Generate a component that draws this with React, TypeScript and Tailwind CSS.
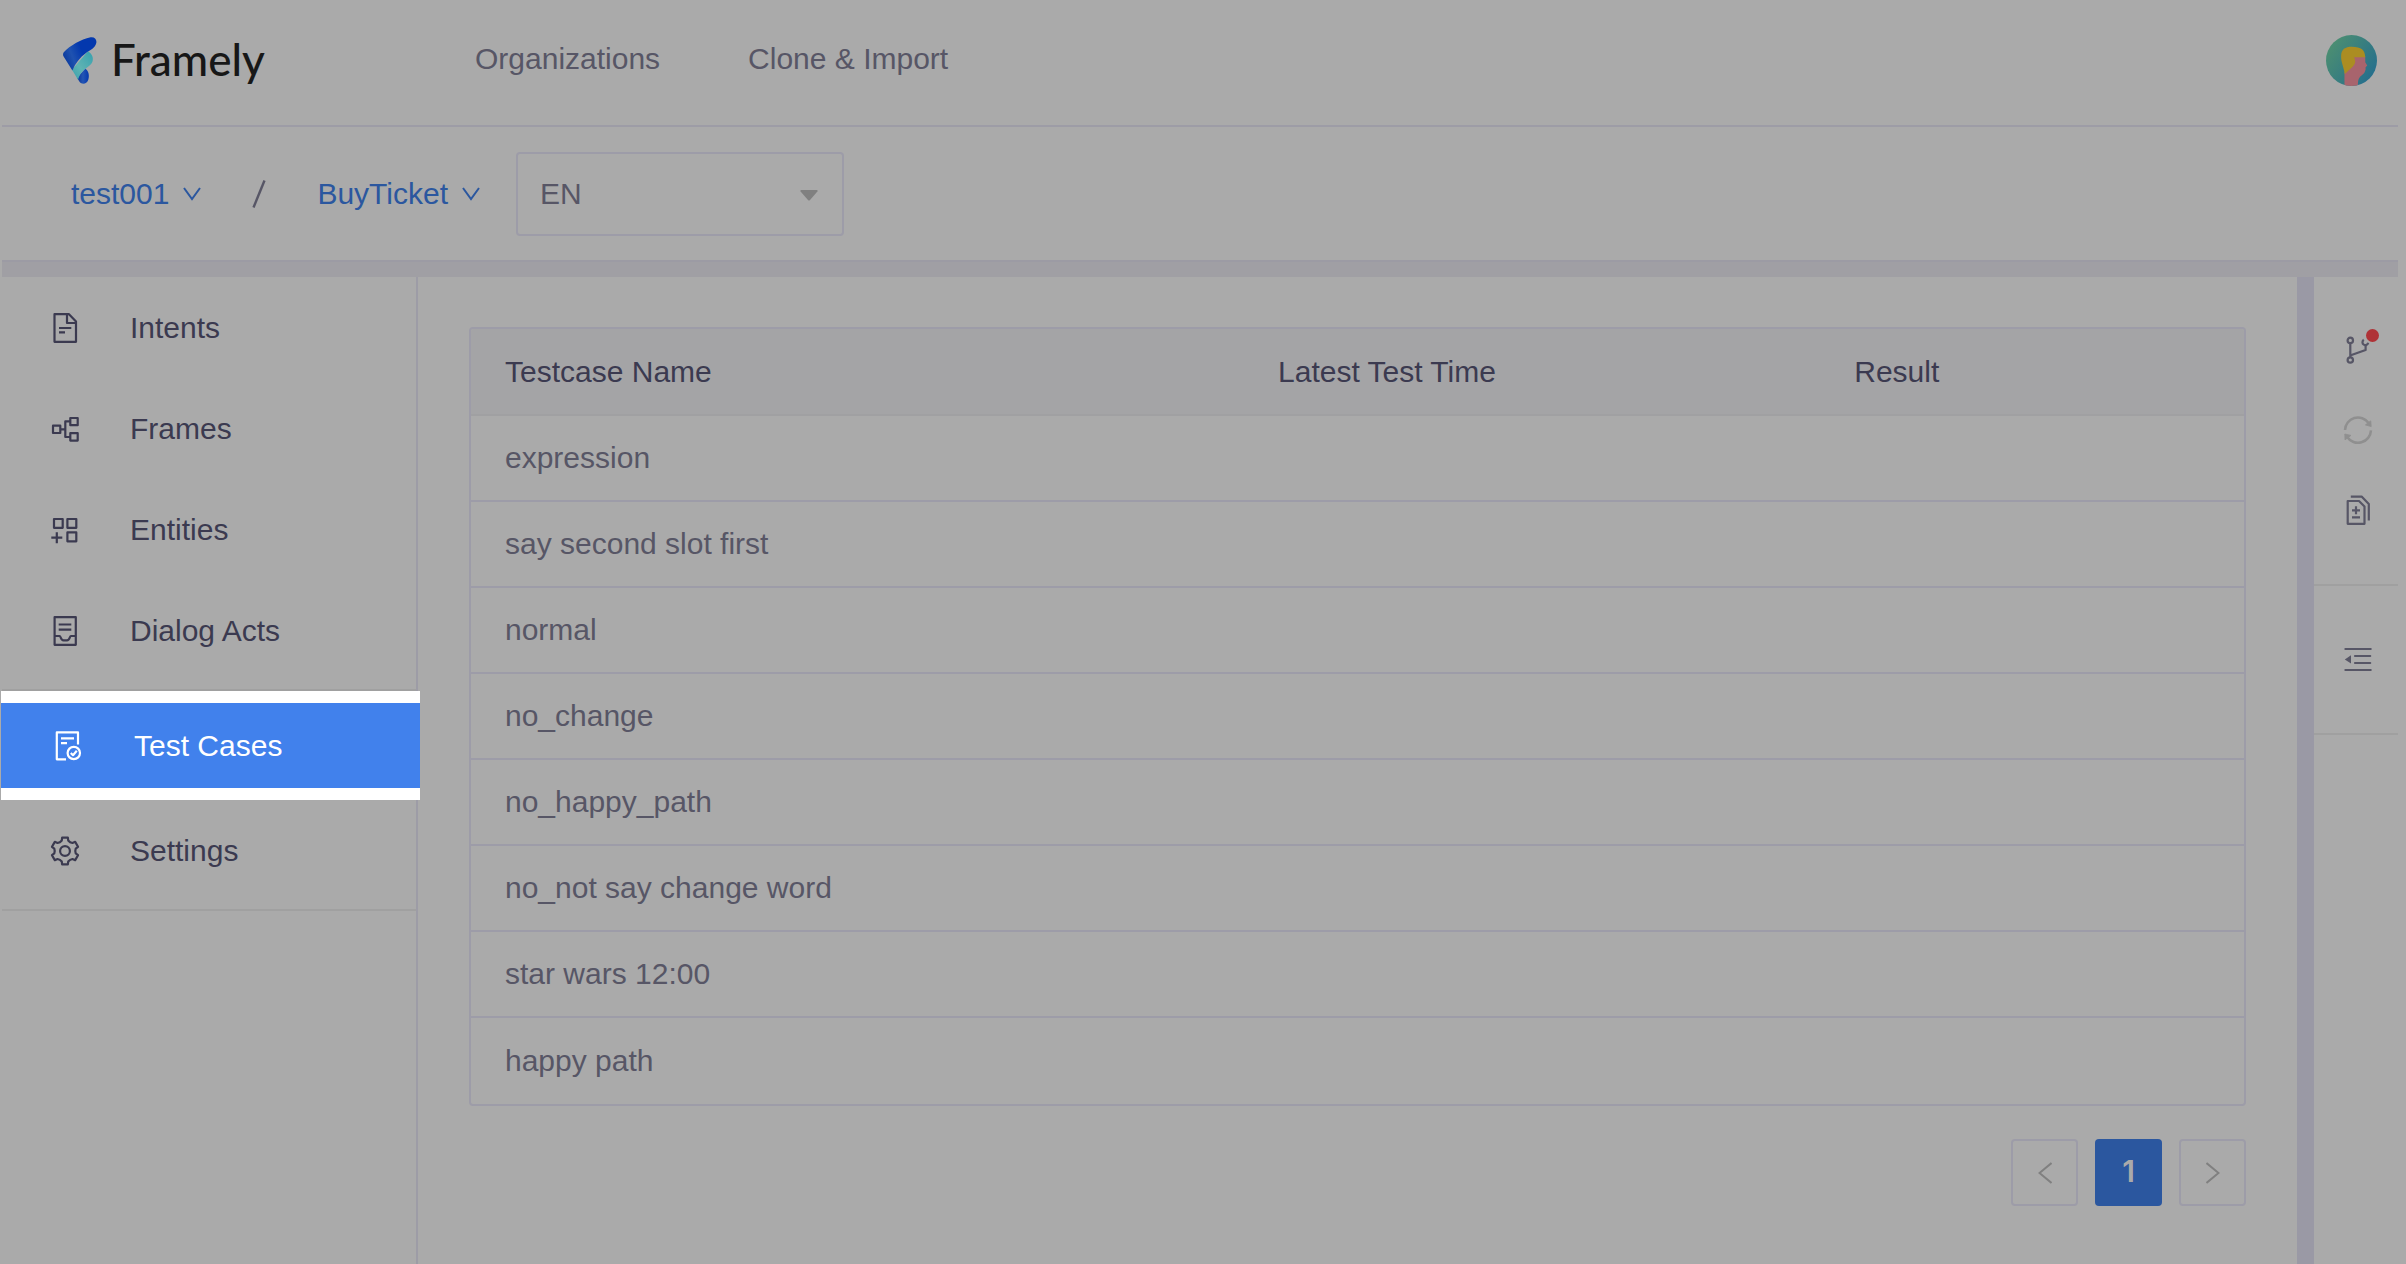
import type { ReactNode } from "react";

const testCases = [
  "expression",
  "say second slot first",
  "normal",
  "no_change",
  "no_happy_path",
  "no_not say change word",
  "star wars 12:00",
  "happy path",
];

function Icon({ children }: { children: ReactNode }) {
  return (
    <svg
      viewBox="0 0 30 30"
      className="size-[30px] shrink-0 overflow-visible"
      fill="none"
      stroke="currentColor"
      strokeWidth="2.2"
      strokeLinejoin="round"
      aria-hidden="true"
    >
      {children}
    </svg>
  );
}

function gearPath() {
  const parts: string[] = [];
  const at = (r: number, deg: number) => {
    const a = (deg * Math.PI) / 180;
    return `${(15 + r * Math.cos(a)).toFixed(2)} ${(15 + r * Math.sin(a)).toFixed(2)}`;
  };
  for (let i = 0; i < 6; i++) {
    const c = -90 + i * 60;
    parts.push(`${i === 0 ? "M" : "L"}${at(13.7, c - 12)}`);
    parts.push(`L${at(13.7, c + 12)}`);
    parts.push(`L${at(11, c + 17)}`);
    parts.push(`Q${at(9.8, c + 30)} ${at(11, c + 43)}`);
  }
  return parts.join("") + "Z";
}

const IntentsIcon = () => (
  <Icon>
    <path d="M4.5 1.2H19L26 8.5V28.8H4.5ZM17 1.5V10H26M9 15H21.3M9 19.3H15" />
  </Icon>
);

const FramesIcon = () => (
  <Icon>
    <path d="M3 11.7H10.3V19H3ZM20.3 4H27.7V11.2H20.3ZM20.3 19.2H27.7V26.6H20.3ZM10.3 15.3H15M20.3 7.4H15.3V23H20.3" />
  </Icon>
);

const EntitiesIcon = () => (
  <Icon>
    <path d="M4 4H12.7V12.8H4ZM17.4 4H26.3V12.8H17.4ZM17.4 17.4H26.3V26.3H17.4ZM1.3 22.7H12.3M6.8 17.2V28.2" />
  </Icon>
);

const DialogIcon = () => (
  <Icon>
    <path d="M4.6 1.2H25.8V28.8H4.6ZM8.7 8.5H21.3M8.7 13.7H21.3M4.6 20H9.5C11 20 10.5 24.3 13.5 24.3H17C20 24.3 19.5 20 21 20H25.8" />
  </Icon>
);

const TestIcon = () => (
  <Icon>
    <path d="M26 13.5V1.4H4.8V28.3H14M9 7.4H22M9 12.2H15" />
    <circle cx="21.8" cy="22" r="6.2" />
    <path d="M18.8 22L21 24.2L24.8 19.8" />
  </Icon>
);

const SettingsIcon = () => (
  <Icon>
    <path d={gearPath()} />
    <circle cx="15" cy="15" r="4.9" />
  </Icon>
);

const BranchIcon = () => (
  <Icon>
    <circle cx="7.3" cy="5.4" r="2.7" />
    <circle cx="7.3" cy="25" r="2.7" />
    <path d="M7.3 8.1V22.3M7.8 20.2L22.6 15V10.3" />
    <path d="M20.8 4.8A2.9 2.9 0 1 0 25.2 7.8" />
  </Icon>
);

const SyncIcon = () => (
  <Icon>
    <path d="M2 15A13 13 0 0 1 25.6 8M28 15.4A13 13 0 0 1 4.2 22" strokeWidth="2.5" />
    <path d="M27.8 5.8L28.2 11.6L22.4 9.9ZM1.8 19L2 24.9L8 20.4Z" fill="currentColor" strokeWidth="0.8" />
  </Icon>
);

const DocsIcon = () => (
  <Icon>
    <path d="M4.7 6H16L21.5 11.5V28.8H4.7ZM7.8 1.6H18.6L25.8 9V25.4M9 15.3H17M13 11.3V19.3M9 22.4H17" />
  </Icon>
);

const OutdentIcon = () => (
  <Icon>
    <path d="M2.4 5H27.7M12 12H27.2M12 19H27.2M2.4 26H27.7" strokeLinecap="round" />
    <path d="M1.8 15.4L8 11.2V19.6Z" fill="currentColor" stroke="none" />
  </Icon>
);

const LogoMark = () => (
  <svg viewBox="189 107 102 142" className="h-[47px] w-[34px] shrink-0" aria-hidden="true">
    <defs>
      <linearGradient id="logoTop" x1="0" y1="0.6" x2="1" y2="0.2">
        <stop offset="0" stopColor="#0b3a9c" />
        <stop offset="0.25" stopColor="#1f52b0" />
        <stop offset="0.55" stopColor="#0338ae" />
      </linearGradient>
      <linearGradient id="logoMid" x1="0" y1="1" x2="1" y2="0">
        <stop offset="0" stopColor="#35a0ae" />
        <stop offset="0.4" stopColor="#5fb3b3" />
        <stop offset="1" stopColor="#35a0ae" />
      </linearGradient>
      <linearGradient id="logoLow" x1="0" y1="0" x2="1" y2="0">
        <stop offset="0" stopColor="#0a3396" />
        <stop offset="0.5" stopColor="#2355b4" />
        <stop offset="1" stopColor="#0338ae" />
      </linearGradient>
    </defs>
    <path
      fill="url(#logoLow)"
      d="M256 202C266 210 269 222 265 236C261 248 247 252 239 243L231 230Z"
    />
    <path
      fill="url(#logoMid)"
      d="M264 150C276 158 281 168 278 180C274 192 262 198 252 207C243 215 238 223 234 236L216 206Z"
    />
    <path
      fill="url(#logoTop)"
      d="M191 153C210 133 242 115 272 108C284 106 292 115 289 126C286 140 272 146 258 155C240 168 226 186 217 208L191 167C188 162 188 157 191 153Z"
    />
  </svg>
);

const Avatar = () => (
  <svg viewBox="379 108 152 152" className="size-[51px]" aria-hidden="true">
    <defs>
      <linearGradient id="avatarBg" x1="0" y1="0.1" x2="1" y2="0.8">
        <stop offset="0.05" stopColor="#4e9070" />
        <stop offset="1" stopColor="#236d8e" />
      </linearGradient>
      <clipPath id="avatarClip">
        <circle cx="455" cy="184" r="76" />
      </clipPath>
    </defs>
    <g clipPath="url(#avatarClip)">
      <rect x="379" y="108" width="152" height="152" fill="url(#avatarBg)" />
      <path
        fill="#a8646d"
        d="M460 172H496V189L502 199L497 204V211C495 221 491 224 485 229C476 236 474 242 474 262H434V220Z"
      />
      <path
        fill="#ab8d22"
        d="M435 224C431 200 424 190 424 172C424 150 436 143 456 143C485 143 495 153 496 174H462C469 185 467 194 456 205Z"
      />
    </g>
  </svg>
);

const ChevronDown = () => (
  <svg viewBox="0 0 18 14" className="h-[14px] w-[18px]" fill="none" stroke="currentColor" strokeWidth="2" aria-hidden="true">
    <path d="M1 1L9 12L17 1" />
  </svg>
);

function NavItem({ icon, label }: { icon: ReactNode; label: string }) {
  return (
    <a href="#" className="flex h-[101px] items-center gap-[50px] pl-12 text-[#3b3a50]">
      {icon}
      <span>{label}</span>
    </a>
  );
}

function PageButton({ label, children }: { label: string; children: ReactNode }) {
  return (
    <button
      type="button"
      aria-label={label}
      className="flex size-[67px] items-center justify-center rounded border-2 border-[#9d9ca8] text-[#808080]"
    >
      {children}
    </button>
  );
}

export default function App() {
  return (
    <div className="flex min-h-screen flex-col bg-[#aaaaaa] pr-2 pl-0.5 font-['Liberation_Sans',Arial,sans-serif] text-[30px] leading-[36px] text-[#575666]">
      <header className="flex h-[127px] items-center border-b-2 border-[#9d9ca6] pr-[21px] pb-1 pl-[61px]">
        <a href="#" className="flex w-[412px] items-center gap-[14px]">
          <LogoMark />
          <span className="pb-1 font-['Lato',sans-serif] text-[44px] leading-[48px] font-medium text-[#171717]">Framely</span>
        </a>
        <nav className="flex grow gap-[88px] pb-1">
          <a href="#">Organizations</a>
          <a href="#">Clone &amp; Import</a>
        </nav>
        <button type="button" aria-label="Account">
          <Avatar />
        </button>
      </header>

      <div className="flex h-[133px] items-center pl-[69px]">
        <button type="button" className="flex items-center gap-3.5 text-[#2b579f]">
          test001
          <ChevronDown />
        </button>
        <svg viewBox="0 0 14 28" className="mx-[51px] h-7 w-[14px]" fill="none" stroke="currentColor" strokeWidth="2.4" aria-hidden="true">
          <path d="M1.5 27.5L12.5 0.5" />
        </svg>
        <button type="button" className="flex items-center gap-3.5 text-[#2b579f]">
          BuyTicket
          <ChevronDown />
        </button>
        <div className="relative ml-9">
          <select
            aria-label="Language"
            defaultValue="EN"
            className="h-[84px] w-[328px] appearance-none rounded border-2 border-[#9d9ca8] bg-transparent pl-[22px]"
          >
            <option>EN</option>
          </select>
          <svg viewBox="0 0 18 11" className="pointer-events-none absolute top-[38px] right-[26px] h-[11px] w-[18px] fill-[#808080]" aria-hidden="true">
            <path d="M1 0H17Q18 0.5 17.4 1.4L10 10Q9 11 8 10L0.6 1.4Q0 0.5 1 0Z" />
          </svg>
        </div>
      </div>

      <div className="h-[17px] border-t-2 border-[#9c9ba4] bg-[#a09fa4]" />

      <div className="flex grow">
        <aside className="w-[416px] shrink-0 border-r-2 border-[#9d9ca6]">
          <nav>
            <div className="border-b-2 border-[#a0a0a0] pb-2">
              <NavItem icon={<IntentsIcon />} label="Intents" />
              <NavItem icon={<FramesIcon />} label="Frames" />
              <NavItem icon={<EntitiesIcon />} label="Entities" />
              <NavItem icon={<DialogIcon />} label="Dialog Acts" />
            </div>
            <div className="relative -mr-1 -ml-px bg-white py-3">
              <a
                href="#"
                aria-current="page"
                className="flex h-[85px] items-center gap-[52px] bg-[#4181ec] pl-[51px] text-white"
              >
                <TestIcon />
                <span>Test Cases</span>
              </a>
            </div>
            <div className="border-b-2 border-[#a0a0a0] pb-2">
              <NavItem icon={<SettingsIcon />} label="Settings" />
            </div>
          </nav>
        </aside>

        <main className="grow px-[51px] pt-[50px]">
          <div className="overflow-hidden rounded border-2 border-[#9d9ca8]">
            <table className="w-full table-fixed border-separate border-spacing-0 text-left">
              <thead>
                <tr className="h-[87px] bg-[#a4a4a6] text-[#3b3a50]">
                  <th className="w-[43.6%] border-b-2 border-[#a0a0a2] px-[34px] font-normal">Testcase Name</th>
                  <th className="w-[32.5%] border-b-2 border-[#a0a0a2] px-[34px] font-normal">Latest Test Time</th>
                  <th className="border-b-2 border-[#a0a0a2] px-[34px] font-normal">Result</th>
                </tr>
              </thead>
              <tbody className="[&>tr:not(:last-child)>td]:border-b-2">
                {testCases.map((name) => (
                  <tr key={name} className="h-[86px]">
                    <td className="border-[#9d9ca8] px-[34px]">{name}</td>
                    <td className="border-[#9d9ca8]" />
                    <td className="border-[#9d9ca8]" />
                  </tr>
                ))}
              </tbody>
            </table>
          </div>

          <nav aria-label="Pagination" className="mt-[33px] flex justify-end gap-[17px]">
            <PageButton label="Previous page">
              <svg viewBox="0 0 14 22" className="h-[22px] w-[14px]" fill="none" stroke="currentColor" strokeWidth="2" aria-hidden="true">
                <path d="M13.5 1L1.5 11L13.5 21" />
              </svg>
            </PageButton>
            <button
              type="button"
              aria-current="page"
              className="flex size-[67px] items-center justify-center rounded bg-[#2b579f] pb-1 font-['Inter',sans-serif] font-semibold text-[#aaaaaa]"
            >
              1
            </button>
            <PageButton label="Next page">
              <svg viewBox="0 0 14 22" className="h-[22px] w-[14px]" fill="none" stroke="currentColor" strokeWidth="2" aria-hidden="true">
                <path d="M0.5 1L12.5 11L0.5 21" />
              </svg>
            </PageButton>
          </nav>
        </main>

        <aside className="w-[101px] shrink-0 border-l-[17px] border-[#9a99a5]">
          <div className="flex flex-col items-center gap-[50px] border-b-2 border-b-[#a0a0a0] pt-[58px] pb-[59px] pl-1">
            <button type="button" aria-label="Branches" className="relative">
              <BranchIcon />
              <span className="absolute -top-1.5 -right-1.5 size-[13px] rounded-full bg-[#af3236]" />
            </button>
            <button type="button" aria-label="Sync" className="text-[#8f8f8f]">
              <SyncIcon />
            </button>
            <button type="button" aria-label="Compare versions">
              <DocsIcon />
            </button>
          </div>
          <div className="flex flex-col items-center border-b-2 border-b-[#a0a0a0] pt-[58px] pb-[59px] pl-1">
            <button type="button" aria-label="Collapse panel">
              <OutdentIcon />
            </button>
          </div>
        </aside>
      </div>
    </div>
  );
}
